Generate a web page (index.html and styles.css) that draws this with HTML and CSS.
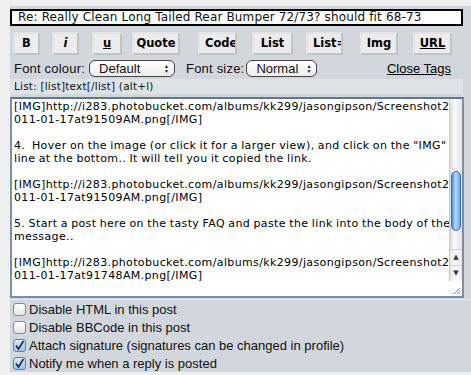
FILE: index.html
```html
<!DOCTYPE html>
<html lang="en">
<head>
<meta charset="utf-8">
<title>Post a reply</title>
<link rel="stylesheet" href="styles.css">
</head>
<body>
<div class="panel">
	<div class="subject">Re: Really Clean Long Tailed Rear Bumper 72/73? should fit 68-73</div>
	<div class="button-row">
		<span class="btn btn-b">B</span>
		<span class="btn btn-i"><i>i</i></span>
		<span class="btn btn-u"><u>u</u></span>
		<span class="btn btn-quote">Quote</span>
		<span class="btn btn-code">Code</span>
		<span class="btn btn-list">List</span>
		<span class="btn btn-liste">List=</span>
		<span class="btn btn-img">Img</span>
		<span class="btn btn-url"><u>URL</u></span>
	</div>
	<div class="font-row">
		<span class="label">Font colour:</span>
		<span class="select sel-colour"><span>Default</span><span class="arrows">&#9650;<br>&#9660;</span></span>
		<span class="label label-size">Font size:</span>
		<span class="select sel-size"><span>Normal</span><span class="arrows">&#9650;<br>&#9660;</span></span>
		<a class="close-tags" href="#">Close Tags</a>
	</div>
	<div class="help-row">List: [list]text[/list] (alt+l)</div>
	<div class="textarea">
		<div class="text">
			<div>[IMG]http://i283.photobucket.com/albums/kk299/jasongipson/Screenshot2</div>
			<div>011-01-17at91509AM.png[/IMG]</div>
			<div>&nbsp;</div>
			<div>4.&nbsp; Hover on the image (or click it for a larger view), and click on the "IMG"</div>
			<div>line at the bottom.. It will tell you it copied the link.</div>
			<div>&nbsp;</div>
			<div>[IMG]http://i283.photobucket.com/albums/kk299/jasongipson/Screenshot2</div>
			<div>011-01-17at91509AM.png[/IMG]</div>
			<div>&nbsp;</div>
			<div>5. Start a post here on the tasty FAQ and paste the link into the body of the</div>
			<div>message..</div>
			<div>&nbsp;</div>
			<div>[IMG]http://i283.photobucket.com/albums/kk299/jasongipson/Screenshot2</div>
			<div>011-01-17at91748AM.png[/IMG]</div>
		</div>
		<div class="scrollbar">
			<div class="track">
				<div class="thumb"></div>
			</div>
			<div class="arrow">&#9650;</div>
			<div class="arrow">&#9660;</div>
		</div>
		<svg class="grip" width="8" height="8" viewBox="0 0 8 8"><path d="M7 1L1 7M7 4L4 7M7 6.5L6.5 7" stroke="#888" stroke-width="1"/></svg>
	</div>
	<div class="options">
		<label class="opt"><span class="check"></span>Disable HTML in this post</label>
		<label class="opt"><span class="check"></span>Disable BBCode in this post</label>
		<label class="opt"><span class="check checked"><svg width="11" height="11" viewBox="0 0 11 11"><path d="M2 5.5L4.5 9L9.5 1" fill="none" stroke="#1a2a40" stroke-width="1.6"/></svg></span>Attach signature (signatures can be changed in profile)</label>
		<label class="opt"><span class="check checked"><svg width="11" height="11" viewBox="0 0 11 11"><path d="M2 5.5L4.5 9L9.5 1" fill="none" stroke="#1a2a40" stroke-width="1.6"/></svg></span>Notify me when a reply is posted</label>
	</div>
</div>
</body>
</html>
```

FILE: styles.css
```css
body {
	margin: 0;
	background: #efefef;
	height: 375px;
	overflow: hidden;
}
.panel {
	margin: 6px 0 0 10px;
	padding-top: 3px;
	height: 363px;
	background: #d1d7dc;
	font-family: "DejaVu Sans", Verdana, sans-serif;
}
.subject {
	box-sizing: border-box;
	width: 453px;
	height: 17px;
	border: 2px solid #000;
	background: #fff;
	font-size: 12px;
	letter-spacing: 0.15px;
	line-height: 13px;
	padding-left: 6px;
	white-space: nowrap;
	color: #111;
}
.button-row {
	display: flex;
	margin-top: 6px;
	height: 23px;
}
.btn {
	box-sizing: border-box;
	height: 23px;
	border: 2px solid #e4e4e4;
	border-right-color: #c4c4c4;
	border-bottom-color: #c4c4c4;
	background: #ececec;
	font-size: 11.5px;
	font-weight: bold;
	line-height: 19px;
	text-align: center;
	overflow: hidden;
	white-space: nowrap;
	color: #000;
}
.btn-b { width: 27px; margin-left: 3px; }
.btn-i { width: 27px; margin-left: 12px; }
.btn-u { width: 30px; margin-left: 13px; }
.btn-quote { width: 48px; margin-left: 10px; }
.btn-code { width: 39px; margin-left: 18px; text-align: left; padding-left: 5px; }
.btn-list { width: 41px; margin-left: 15px; }
.btn-liste { width: 37px; margin-left: 13px; text-align: left; padding-left: 5px; }
.btn-img { width: 38px; margin-left: 17px; }
.btn-url { width: 39px; margin-left: 15px; }
.font-row {
	display: flex;
	align-items: center;
	margin-top: 5px;
	height: 17px;
	font-family: "Liberation Sans", Arial, sans-serif;
	font-size: 13px;
	color: #111;
}
.label {
	margin-left: 4px;
	letter-spacing: 0.2px;
}
.label-size {
	margin-left: 11px;
}
.select {
	box-sizing: border-box;
	display: flex;
	align-items: center;
	justify-content: space-between;
	height: 17px;
	margin-left: 4px;
	padding: 0 5px 0 9px;
	border: 1px solid #444;
	border-radius: 6px;
	background: linear-gradient(#ffffff, #ededed);
	font-size: 13px;
}
.sel-colour { width: 86px; }
.sel-size { width: 71px; margin-left: 2px; }
.arrows {
	font-size: 5px;
	line-height: 5px;
	text-align: center;
}
.close-tags {
	margin-left: auto;
	margin-right: 20px;
	color: #000;
	text-decoration: underline;
}
.help-row {
	margin-top: 2px;
	height: 15px;
	width: 453px;
	background: #dee3e7;
	font-size: 10.5px;
	letter-spacing: 0.2px;
	line-height: 15px;
	padding-left: 4px;
	box-sizing: border-box;
	color: #111;
}
.textarea {
	position: relative;
	box-sizing: border-box;
	display: flex;
	width: 454px;
	height: 201px;
	margin-top: 3px;
	border: 2px solid #7890ab;
	border-top-color: #5d7693;
	background: #fff;
	overflow: hidden;
}
.text {
	flex: 1;
	padding: 1px 0 0 2px;
	font-size: 11px;
	letter-spacing: 0.37px;
	word-spacing: -0.5px;
	line-height: 13px;
	white-space: nowrap;
	overflow: hidden;
	color: #000;
}
.scrollbar {
	width: 12px;
	height: 182px;
	display: flex;
	flex-direction: column;
	border-left: 1px solid #c8c8c8;
	background: #f4f4f4;
}
.track {
	flex: 1;
	border-radius: 6px 6px 0 0;
	background: linear-gradient(to right, #dcdcdc, #fafafa 40%, #e6e6e6);
	padding-top: 72px;
}
.thumb {
	height: 58px;
	margin: 0 1px;
	border-radius: 6px;
	border: 1px solid #3d6fb8;
	background: linear-gradient(to right, #4f8ee0, #b9d7fb 45%, #6ea6ee);
}
.arrow {
	height: 15px;
	font-size: 7px;
	line-height: 15px;
	text-align: center;
	color: #333;
	border-top: 1px solid #cfcfcf;
	background: linear-gradient(to right, #e6e6e6, #fdfdfd, #e8e8e8);
}
.grip {
	position: absolute;
	right: 1px;
	bottom: 1px;
}
.options {
	margin-top: 1px;
	border-top: 1px solid #e3e7eb;
	font-family: "Liberation Sans", Arial, sans-serif;
	font-size: 13px;
	color: #111;
}
.opt {
	display: flex;
	align-items: center;
	height: 18px;
}
.check {
	box-sizing: border-box;
	display: flex;
	align-items: center;
	justify-content: center;
	width: 13px;
	height: 13px;
	margin: 0 3px 0 3px;
	border: 1px solid #8a8a8a;
	border-radius: 3px;
	background: linear-gradient(#ffffff, #e4e4e4);
}
.check.checked {
	border-color: #5b7fae;
	background: linear-gradient(#d8e8fb, #9cc2ee);
}
```
